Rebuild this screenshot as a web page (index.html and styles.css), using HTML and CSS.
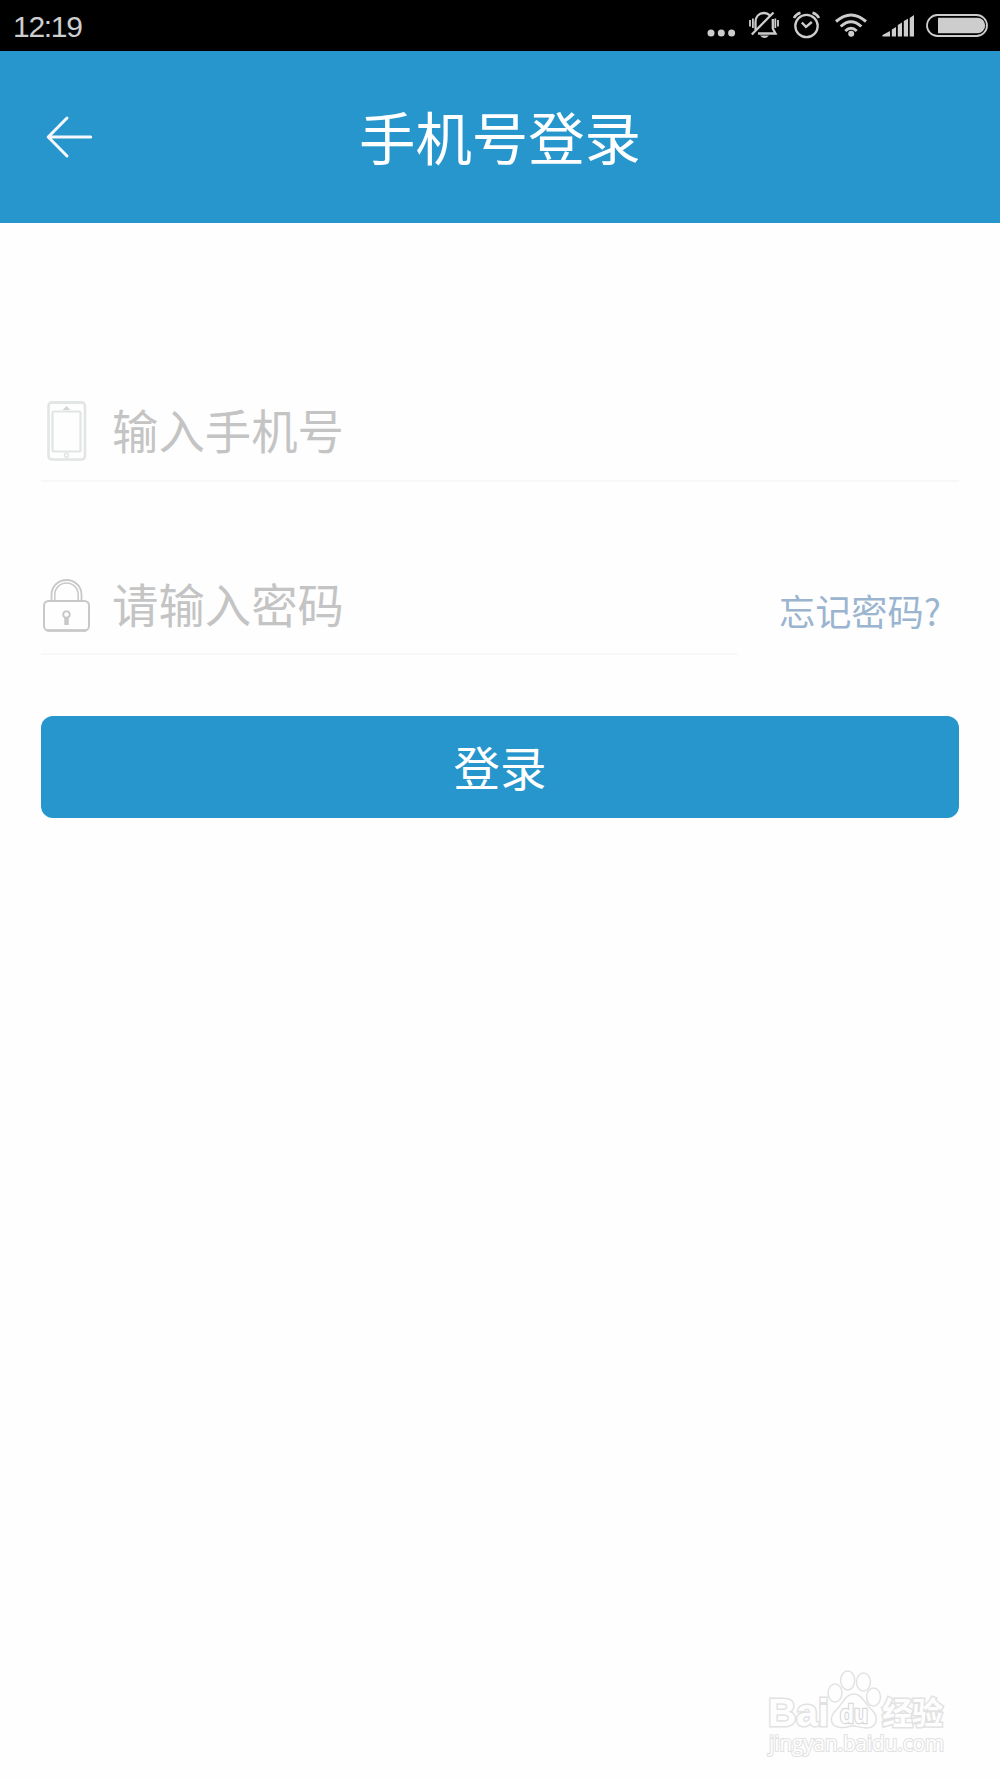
FILE: index.html
```html
<!DOCTYPE html>
<html lang="zh-CN">
<head>
<meta charset="utf-8">
<title>手机号登录</title>
<link rel="stylesheet" href="styles.css">
</head>
<body>
<div class="screen">
  <div class="status">
    <span class="clock">12:19</span>
    <svg class="status-icons" width="300" height="51" viewBox="700 0 300 51" fill="none" stroke="#cdcdcd">
      <g fill="#cdcdcd" stroke="none">
        <circle cx="711" cy="33" r="3.5"/><circle cx="721.3" cy="33" r="3.5"/><circle cx="731.6" cy="33" r="3.5"/>
      </g>
      <g stroke-width="2.300">
        <path d="M755.500 30V22C755.500 16.500 759 13 764 13C766.500 13 768.500 14 770 15.500M772.800 19V28.500L775.500 33.500H758"/>
        <path d="M751.800 34.500L773.500 12.500"/>
        <path d="M750 20V26.500M752.900 18.500V28M775.300 18.500V28M778 20V26.500" stroke-width="1.800"/>
      </g>
      <path d="M760 35.500H769Q764.500 40.500 760 35.500Z" fill="#cdcdcd" stroke="none"/>
      <circle cx="806.500" cy="26" r="11.200" stroke-width="2.300"/>
      <path d="M801.800 22.500L806 26.800L811.800 22" stroke-width="2.400"/>
      <path d="M794 18Q796 14 800.500 12.800M812.500 12.800Q817 14 819 18" stroke-width="2.500"/>
      <g stroke-width="3">
        <path d="M836 21.500Q851 8.500 866 21.500M840.700 26.500Q851 17 861.300 26.500M845.300 31Q851 25.500 856.700 31"/>
      </g>
      <circle cx="851.200" cy="33.800" r="3" fill="#cdcdcd" stroke="none"/>
      <path d="M882.500 36.500V35L890 31V36.500ZM891.800 36.500V29.500L896 27V36.500ZM897.800 36.500V25L902 22.500V36.500ZM903.800 36.500V21L908 18.700V36.500ZM909.700 36.500V18L914 15V36.500Z" fill="#cdcdcd" stroke="none"/>
      <rect x="927" y="15" width="60" height="21" rx="10.500" stroke-width="1.800"/>
      <path d="M938 17.800H977.500A7.700 7.700 0 0 1 977.500 33.200H938Z" fill="#cdcdcd" stroke="none"/>
    </svg>
  </div>
  <header class="header">
    <svg class="back" width="48" height="44" viewBox="45.300 114.500 48 44" fill="none" stroke="#f4f8fc" stroke-width="3" stroke-linecap="round" stroke-linejoin="round"><path d="M67.300 117.500L48.500 136.500L67.300 155.500M49 136.500H91"/></svg>
    <h1 class="title">手机号登录</h1>
  </header>
  <main class="form">
    <div class="field">
      <svg class="icon" width="50" height="64" viewBox="41 399 50 64" fill="none" stroke="#e1e5e4" stroke-width="2.600">
        <rect x="48.500" y="402.500" width="36.500" height="57" rx="3.500"/>
        <path d="M50 402.500H83.500"/>
        <rect x="52.500" y="411.500" width="28" height="40" rx="1.500" stroke-width="2.200"/>
        <path d="M65 409L66.500 407.500L68 409Z" stroke="#d3d6d5" stroke-width="2"/>
        <circle cx="66.500" cy="455.300" r="2" stroke-width="1.600"/>
      </svg>
      <span class="hint">输入手机号</span>
    </div>
    <div class="row">
      <div class="field field-password">
        <svg class="icon" width="50" height="64" viewBox="41 572 50 64" fill="none" stroke="#c8c8c8">
          <path d="M51.500 600V594.500A15 14.500 0 0 1 81.500 594.500V600" stroke-width="1.800"/>
          <path d="M54.800 600V594.500A11.700 11.500 0 0 1 78.200 594.500V600" stroke-width="1.500"/>
          <rect x="44" y="601" width="45" height="29.500" rx="4.500" stroke-width="2"/>
          <path d="M47 630.500H86" stroke-width="2.600"/>
          <circle cx="66.500" cy="614.500" r="3.300" stroke-width="2"/>
          <path d="M66.500 618V625" stroke-width="4.500"/>
        </svg>
        <span class="hint">请输入密码</span>
      </div>
      <a class="forgot">忘记密码?</a>
    </div>
    <div class="button">登录</div>
  </main>
  <footer class="footer">
    <svg width="190" height="92" viewBox="764 1668 190 92" fill="#fefefe" stroke="#e2e2e2" stroke-width="1.500">
      <ellipse cx="835" cy="1693" rx="7" ry="9"/>
      <ellipse cx="847.700" cy="1680.500" rx="7" ry="9.500"/>
      <ellipse cx="863.500" cy="1682" rx="7" ry="9"/>
      <ellipse cx="873.500" cy="1697" rx="7" ry="9"/>
      <path d="M854 1694C862 1694 865 1704 872 1710C880 1718 876 1728 867 1728C860 1728 858 1726 853 1726C847 1726 844 1729 838 1727C829 1725 830 1716 836 1710C843 1704 845 1694 854 1694Z"/>
      <g class="brand">
        <text x="768" y="1726" font-size="39" textLength="61" lengthAdjust="spacingAndGlyphs">Bai</text>
        <text class="brand-du" x="840" y="1723" font-size="25" textLength="28" lengthAdjust="spacingAndGlyphs">du</text>
        <text class="brand-cjk" x="882" y="1724" font-size="31" textLength="61">经验</text>
      </g>
      <text class="url" x="769" y="1751" font-size="21" textLength="175" lengthAdjust="spacingAndGlyphs">jingyan.baidu.com</text>
    </svg>
  </footer>
</div>
</body>
</html>
```
FILE: styles.css
```css
* { box-sizing: border-box; }
body { margin: 0; background: #fefefe; font-family: "Noto Sans CJK SC", sans-serif; }
.screen { width: 1000px; height: 1778px; display: flex; flex-direction: column; }
.status { height: 51px; background: #000; display: flex; justify-content: space-between; padding-left: 13px; }
.clock { font: 30px/53px "Liberation Sans", sans-serif; letter-spacing: -1.300px; color: #cdcdcd; }
.status-icons { display: block; }
.header { height: 172px; background: #2796cc; display: grid; grid-template-columns: 93px 1fr 93px; align-items: center; }
.back { justify-self: end; }
.title { margin: 0; padding-bottom: 2px; text-align: center; color: #fff; font-size: 56.400px; line-height: 80px; font-weight: 400; }
.form { padding: 158px 41px 0; }
.field { height: 101px; display: flex; align-items: center; gap: 21px; border-bottom: 2px solid #f8f8f8; }
.hint { color: #c4c4c4; font-size: 46.400px; line-height: 64px; padding-bottom: 4px; }
.field-password .hint { padding-bottom: 2px; }
.icon { display: block; flex: none; }
.row { display: flex; align-items: flex-start; gap: 41px; margin-top: 72px; }
.field-password { width: 697px; }
.forgot { color: #9bb5d0; font-size: 36.200px; line-height: 50px; margin-top: 31px; white-space: nowrap; }
.button { height: 102px; margin-top: 61px; border-radius: 12px; background: #2796cc; color: #fff; font-size: 46.400px; line-height: 100px; text-align: center; }
.footer { margin-top: auto; display: flex; justify-content: flex-end; padding: 0 46px 18px 0; }
.brand { font-family: "Liberation Sans", sans-serif; font-weight: 700; paint-order: stroke; stroke-width: 3px; }
.brand-du { stroke: #d8d8d8; stroke-width: 2.500px; }
.brand-cjk { font-family: "Noto Sans CJK SC", sans-serif; font-weight: 700; }
.url { font-family: "Open Sans", sans-serif; paint-order: stroke; stroke-width: 2.200px; }
```
